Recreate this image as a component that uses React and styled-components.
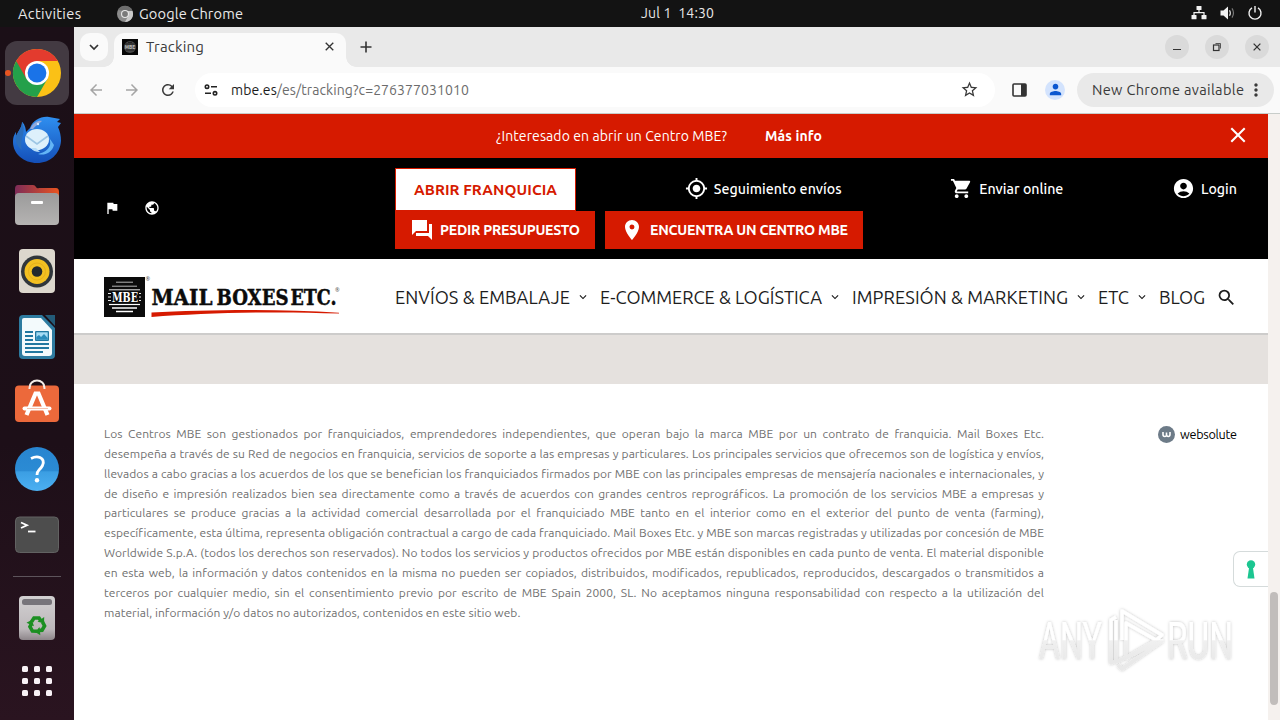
import React, { useLayoutEffect, useRef, useState } from 'react';
import styled, { createGlobalStyle, css } from 'styled-components';
import {
  MdAccountCircle,
  MdArrowBack,
  MdArrowForward,
  MdFlag,
  MdGpsFixed,
  MdKeyboardArrowDown,
  MdMoreVert,
  MdPerson,
  MdPlace,
  MdPublic,
  MdRefresh,
  MdSearch,
  MdShoppingCart,
  MdStarBorder,
} from 'react-icons/md';

const red = '#d61a00';

const GlobalStyle = createGlobalStyle`
  * {
    box-sizing: border-box;
  }
  body {
    margin: 0;
    overflow: hidden;
    font-family: Ubuntu, "Noto Sans", "Open Sans", sans-serif;
  }
  svg {
    display: block;
    flex: none;
    overflow: visible;
  }
`;

const Desktop = styled.div`
  position: relative;
  width: 1280px;
  height: 720px;
  display: flex;
  flex-direction: column;
  overflow: hidden;
`;

const FitBox = styled.span`
  display: block;
  flex: none;
  white-space: nowrap;
`;

// Label that tracks its letters so that it fills a slot of `width` pixels
const Fit = ({ width, children }) => {
  const ref = useRef(null);
  const [spacing, setSpacing] = useState(0);

  useLayoutEffect(() => {
    const natural = ref.current.getBoundingClientRect().width;
    setSpacing((width - natural) / (ref.current.textContent.length - 1));
  }, [width]);

  return (
    <FitBox style={{ width, letterSpacing: spacing }}>
      <span ref={ref}>{children}</span>
    </FitBox>
  );
};

/* ---------- system bar ---------- */

const SystemBar = styled.header`
  height: 27px;
  flex: none;
  display: grid;
  grid-template-columns: 1fr auto 1fr;
  align-items: center;
  padding: 0 18px;
  background: #131313;
  color: #e9e9e9;
  font-size: 14.6px;
`;

const SystemLeft = styled.div`
  display: flex;
  align-items: center;
`;

const AppName = styled.div`
  display: flex;
  align-items: center;
  gap: 6px;
  margin-left: 36px;
`;

const Clock = styled.div`
  padding: 0 0 2px 75px;
  font-size: 14px;
`;

const SystemTray = styled.div`
  display: flex;
  justify-content: flex-end;
  align-items: center;
  gap: 13px;
  padding-bottom: 1px;
`;

const GreyChrome = () => (
  <svg width="16" height="16" viewBox="0 0 16 16">
    <circle cx="8" cy="8" r="8" fill="#8b8b8b" />
    <path d="M1 4 A8 8 0 0 1 15.5 5 H8 Z" fill="#6d6d6d" />
    <path d="M15.5 5 A8 8 0 0 1 8 16 L11.5 9.5 L10 5 Z" fill="#c9c9c9" />
    <circle cx="8" cy="8" r="4" fill="#e8e8e8" />
    <circle cx="8" cy="8" r="2.9" fill="#7a7a7a" />
  </svg>
);

const Tray = () => (
  <SystemTray>
    <svg width="16" height="14" viewBox="0 0 16 14" fill="#f2f2f2">
      <rect x="5.5" y="0" width="5" height="4" rx="0.6" />
      <rect x="0.5" y="9" width="5" height="4.3" rx="0.6" />
      <rect x="10.5" y="9" width="5" height="4.3" rx="0.6" />
      <path d="M8 4v3M3 9V6.7h10V9" fill="none" stroke="#f2f2f2" strokeWidth="1.2" />
    </svg>
    <svg width="15" height="14" viewBox="0 0 15 14">
      <path d="M0.5 4.5H3.5L8 0.5V13.5L3.5 9.5H0.5Z" fill="#f2f2f2" />
      <path d="M9.5 4.2Q11.2 7 9.5 9.8" fill="none" stroke="#ddd" strokeWidth="1.2" />
      <path d="M12 2.4Q15 7 12 11.6" fill="none" stroke="#777" strokeWidth="1.2" />
    </svg>
    <svg width="14" height="14" viewBox="0 0 14 14" fill="none" stroke="#f2f2f2" strokeWidth="1.4">
      <path d="M4 1.9A6 6 0 1 0 10 1.9" />
      <path d="M7 0V6.5" />
    </svg>
  </SystemTray>
);

/* ---------- dock ---------- */

const Main = styled.div`
  flex: 1;
  display: flex;
  min-height: 0;
`;

const Dock = styled.nav`
  width: 74px;
  flex: none;
  display: flex;
  flex-direction: column;
  align-items: center;
  padding-top: 14px;
  background: linear-gradient(180deg, #1b0f17 0%, #1d0f18 60%, #2a1420 100%);
`;

const DockItem = styled.div`
  position: relative;
  width: 64px;
  height: ${(p) => p.$height || 66}px;
  display: flex;
  align-items: center;
  justify-content: center;
  ${(p) =>
    p.$active &&
    css`
      height: 64px;
      margin-bottom: 2px;
      border-radius: 12px;
      background: #433a42;
      &::before {
        content: '';
        position: absolute;
        left: 0;
        top: 29px;
        width: 6px;
        height: 6px;
        border-radius: 50%;
        background: #e95420;
      }
    `}
`;

const DockDivider = styled.hr`
  width: 48px;
  height: 1px;
  margin: 10px 0 8px;
  border: 0;
  background: #5d545b;
`;

const ChromeIcon = () => (
  <svg width="48" height="48" viewBox="0 0 48 48">
    <circle cx="24" cy="24" r="24" fill="#fbc116" />
    <path d="M24 24 L3.2 12 A24 24 0 0 0 24 48 L34.4 30 Z" fill="#24a04a" />
    <path d="M3.2 12 A24 24 0 0 1 44.8 12 H24 L13.6 30 Z" fill="#e33b2e" />
    <circle cx="24" cy="24" r="12" fill="#fff" />
    <circle cx="24" cy="24" r="9.4" fill="#1a73e8" />
  </svg>
);

const ThunderbirdIcon = () => (
  <svg width="48" height="48" viewBox="0 0 48 48">
    <defs>
      <linearGradient id="tb" x1="0" y1="0" x2="0" y2="1">
        <stop offset="0" stopColor="#2f8ff0" />
        <stop offset="1" stopColor="#144fb8" />
      </linearGradient>
    </defs>
    <path
      d="M9 6C11 7 13 12 13 16L17 12C20 4 28 0 36 1L47 3L44 6L48 7L45 11C47 15 48 20 48 25C47 38 37 47 24 47C11 47 0 38 0 26C0 21 1 19 3 16L3 20C6 14 9 11 9 6Z"
      fill="url(#tb)"
    />
    <path d="M9 6C14 17 6 23 9 34C2 29 2 21 3 16L3 20C6 14 9 11 9 6Z" fill="#2a6dbb" />
    <path d="M17 13C20 6 26 4 29 5C26 8 23 9 20 13Z" fill="#91a9dc" />
    <path d="M35 20C41 30 34 36 25 38C31 40 39 37 41 29Z" fill="#64b5f6" />
    <ellipse cx="24" cy="23.5" rx="12" ry="10.5" fill="#ddf0fb" />
    <path d="M13 20L24 28L35 20" fill="none" stroke="#9dc6e4" strokeWidth="1.6" />
    <path d="M18 32Q20 36 27 36L23 32Z" fill="#b6dcf7" />
    <circle cx="25" cy="8" r="1.2" fill="#d4e8fa" />
  </svg>
);

const FilesIcon = () => (
  <svg width="46" height="42" viewBox="0 0 46 42">
    <defs>
      <linearGradient id="fl" x1="0" x2="1">
        <stop offset="0" stopColor="#7d2c58" />
        <stop offset="1" stopColor="#e95420" />
      </linearGradient>
      <linearGradient id="fg" x1="0" y1="0" x2="0" y2="1">
        <stop offset="0" stopColor="#9b9b9b" />
        <stop offset="1" stopColor="#b5b3b2" />
      </linearGradient>
    </defs>
    <path d="M1 5Q1 1 4 1H19Q21 1 22 3T25 4H42Q45 4 45 8V20H1Z" fill="url(#fl)" />
    <rect x="1" y="9" width="44" height="32" rx="4" fill="url(#fg)" />
    <rect x="17" y="17" width="12" height="3" rx="1" fill="#fff" />
  </svg>
);

const RhythmboxIcon = () => (
  <svg width="38" height="46" viewBox="0 0 38 46">
    <rect x="1" y="1" width="36" height="44" rx="4" fill="#dcd7cd" />
    <circle cx="19" cy="23.5" r="16" fill="#30363b" />
    <circle cx="19" cy="23.5" r="12.5" fill="#f3c021" />
    <circle cx="19" cy="23.5" r="8.5" fill="none" stroke="#e6b01c" strokeWidth="1" />
    <circle cx="19" cy="23.5" r="5.3" fill="#23282e" />
  </svg>
);

const WriterIcon = () => (
  <svg width="38" height="46" viewBox="0 0 38 46">
    <path d="M5 1H24L37 14V41Q37 45 33 45H5Q1 45 1 41V5Q1 1 5 1Z" fill="#2d7ba0" />
    <path d="M6 4H23L34 16V39Q34 42 31 42H7Q4 42 4 39V6Q4 4 6 4Z" fill="#f3fafc" />
    <path d="M27 1H37V12Z" fill="#235b78" />
    <g fill="#2178a0">
      <rect x="7" y="17" width="8" height="2" />
      <rect x="7" y="21" width="8" height="2" />
      <rect x="7" y="25" width="8" height="2" />
      <rect x="7" y="29" width="24" height="2" />
      <rect x="7" y="33" width="24" height="2" />
      <rect x="7" y="37" width="18" height="2" />
      <rect x="17" y="17" width="14" height="10" rx="1" />
    </g>
    <rect x="18.3" y="18.3" width="11.4" height="7.4" fill="#a6dcf4" />
    <path d="M18.3 25.7V23L21 21L23 23L26 20L29.7 24V25.7Z" fill="#2b8cba" />
  </svg>
);

const SoftwareIcon = () => (
  <svg width="46" height="44" viewBox="0 0 46 44">
    <path d="M15.5 8V7.5A7 6.5 0 0 1 30.5 7.5V8" fill="none" stroke="#f4ece7" strokeWidth="2" />
    <rect x="1" y="5.500" width="44" height="36.500" rx="4" fill="#ec693b" />
    <path d="M15.5 9A7 8 0 0 1 16.4 5M30.5 9A7 8 0 0 0 29.6 5" fill="none" stroke="#f4ece7" strokeWidth="2" />
    <g fill="none" stroke="#fff">
      <path d="M12.5 35L21.5 13.5H24.5L33.5 35" strokeWidth="4.2" />
      <path d="M10.500 28.500H35.500" strokeWidth="4" strokeLinecap="round" />
    </g>
    <path d="M13 28.500H34" stroke="#f2b49b" strokeWidth="0.8" />
  </svg>
);

const HelpIcon = () => (
  <svg width="46" height="46" viewBox="0 0 46 46">
    <defs>
      <linearGradient id="hp" x1="0" y1="0" x2="0" y2="1">
        <stop offset="0" stopColor="#2885d0" />
        <stop offset="0.55" stopColor="#2b8bd4" />
        <stop offset="0.56" stopColor="#3b9ee3" />
        <stop offset="1" stopColor="#4cb0f2" />
      </linearGradient>
    </defs>
    <circle cx="23" cy="23" r="22" fill="url(#hp)" />
    <path d="M17 12.5Q22 10 26 11.500Q31 14 28.5 19.500Q27.5 21.500 25 24Q23 26 23 29" fill="none" stroke="#fff" strokeWidth="2.8" />
    <circle cx="23" cy="34.2" r="2.2" fill="#fff" />
  </svg>
);

const TerminalIcon = () => (
  <svg width="46" height="38" viewBox="0 0 46 38">
    <rect x="1.500" y="1" width="43" height="35.500" rx="4" fill="#4d4d4d" stroke="#626262" />
    <path d="M7 6.5L13 9.2L7 12" fill="none" stroke="#fff" strokeWidth="1.8" />
    <path d="M14 15.5H21.5" stroke="#fff" strokeWidth="1.8" />
  </svg>
);

const TrashIcon = () => (
  <svg width="38" height="46" viewBox="0 0 38 46">
    <defs>
      <linearGradient id="tr" x1="0" y1="0" x2="0" y2="1">
        <stop offset="0" stopColor="#d2d0d1" />
        <stop offset="0.75" stopColor="#bdb8bb" />
        <stop offset="1" stopColor="#8d868a" />
      </linearGradient>
    </defs>
    <rect x="1" y="1" width="36" height="44" rx="4" fill="url(#tr)" />
    <rect x="4" y="4" width="30" height="6" rx="2.5" fill="#77747a" />
    <g transform="translate(19 30)" fill="none" stroke="#1c8f22" strokeWidth="3.6">
      {[0, 120, 240].map((a) => (
        <g key={a} transform={`rotate(${a})`}>
          <path d="M-5.400 -3.200L-3 -7H2L3.600 -4.600" />
          <path d="M0.500 -3.200L7 -1.800L7.200 -8Z" fill="#1c8f22" stroke="none" />
        </g>
      ))}
    </g>
  </svg>
);

const GridIcon = () => (
  <svg width="30" height="30" viewBox="0 0 30 30" fill="#f8f2f6">
    {[0, 12, 24].map((y) =>
      [0, 12, 24].map((x) => <rect key={`${x}-${y}`} x={x} y={y} width="6" height="6" rx="1.6" />),
    )}
  </svg>
);

/* ---------- browser chrome ---------- */

const Browser = styled.div`
  flex: 1;
  display: flex;
  flex-direction: column;
  min-width: 0;
  background: #fafafa;
`;

const TabStrip = styled.div`
  height: 40px;
  flex: none;
  display: flex;
  align-items: center;
  padding: 0 11px 0 6px;
  background: #e9e9e9;
`;

const TabSearch = styled.button`
  width: 28px;
  height: 28px;
  display: grid;
  place-items: center;
  padding: 0;
  border: 0;
  border-radius: 10px;
  background: #fafafa;
  color: #333;
`;

const Tab = styled.div`
  position: relative;
  align-self: flex-end;
  width: 232px;
  height: 34px;
  margin-left: 6px;
  padding: 0 12px 7px 8px;
  display: flex;
  align-items: center;
  gap: 8px;
  border-radius: 10px 10px 0 0;
  background: #fafafa;
  color: #3c3c3c;
  font-size: 15px;
  &::before,
  &::after {
    content: '';
    position: absolute;
    bottom: 0;
    width: 10px;
    height: 10px;
  }
  &::before {
    left: -10px;
    background: radial-gradient(circle at 0 0, transparent 9.5px, #fafafa 10px);
  }
  &::after {
    right: -10px;
    background: radial-gradient(circle at 100% 0, transparent 9.5px, #fafafa 10px);
  }
`;

const TabClose = styled.span`
  margin-left: auto;
`;

const NewTab = styled.span`
  margin-left: 14px;
`;

const WindowButtons = styled.div`
  display: flex;
  gap: 16px;
  margin-left: auto;
`;

const WindowButton = styled.button`
  width: 24px;
  height: 24px;
  display: grid;
  place-items: center;
  padding: 0;
  border: 0;
  border-radius: 50%;
  background: #dadada;
`;

const Toolbar = styled.div`
  height: 47px;
  flex: none;
  display: flex;
  align-items: center;
  padding: 0 6px 1px 13px;
  border-bottom: 1px solid #c8cdca;
  color: #3a3a3a;
`;

const NavIcons = styled.div`
  display: flex;
  align-items: center;
  gap: 18px;
  margin-right: 18px;
  .off {
    color: #a5a5a5;
  }
`;

const AddressBar = styled.div`
  width: 800px;
  height: 34px;
  display: flex;
  align-items: center;
  padding: 0 16px 0 9px;
  border-radius: 17px;
  background: #fff;
  font-size: 14px;
  color: #6c6c6c;
  svg:last-child {
    margin-left: auto;
    color: #3a3a3a;
  }
  b {
    font-weight: 400;
    color: #1c1c1c;
  }
`;

const UrlText = styled.div`
  margin-left: 13px;
`;

const Avatar = styled.span`
  width: 20px;
  height: 20px;
  display: grid;
  place-items: center;
  margin: 0 12px 0 18px;
  border-radius: 50%;
  background: #d3e3fd;
  color: #0b57d0;
`;

const SidePanelIcon = styled.span`
  margin-left: 17px;
`;

const UpdateChip = styled.div`
  height: 34px;
  flex: 1;
  display: flex;
  align-items: center;
  padding: 0 7px 0 15px;
  border-radius: 17px;
  background: #e9e9e9;
  font-size: 14.6px;
  svg {
    margin-left: 2px;
  }
`;

const Cross = ({ size, color = '#333', width = 1.5 }) => (
  <svg width={size} height={size} viewBox="0 0 10 10">
    <path d="M0.8 0.8L9.2 9.2M9.2 0.8L0.8 9.2" stroke={color} strokeWidth={width} />
  </svg>
);

/* ---------- page ---------- */

const Viewport = styled.div`
  flex: 1;
  display: flex;
  min-height: 0;
`;

const Page = styled.main`
  position: relative;
  flex: 1;
  min-width: 0;
  display: flex;
  flex-direction: column;
  background: #fff;
`;

const ScrollTrack = styled.div`
  width: 12px;
  flex: none;
  padding: 478px 2px 0;
  background: #f5f1ee;
`;

const ScrollThumb = styled.div`
  height: 113px;
  border-radius: 4px;
  background: #c1bdbb;
`;

const PromoBar = styled.div`
  height: 44px;
  flex: none;
  display: flex;
  align-items: center;
  padding: 0 22px 0 422px;
  background: ${red};
  color: #fff;
  font-size: 14px;
  svg {
    margin: -2px 0 0 auto;
  }
`;

const PromoLink = styled.a`
  margin-left: 38px;
  font-weight: 700;
`;

const ServiceBar = styled.div`
  height: 101px;
  flex: none;
  display: flex;
  padding: 10px 30px 0;
  background: #000;
  color: #fff;
`;

const Locale = styled.div`
  width: 291px;
  flex: none;
  height: 80px;
  display: flex;
  align-items: center;
  gap: 24px;
`;

const Services = styled.div`
  flex: 1;
  margin-right: 1px;
`;

const ServiceRow = styled.div`
  height: 43px;
  display: flex;
  align-items: center;
  justify-content: space-between;
`;

const FranchiseButton = styled.a`
  height: 43px;
  display: flex;
  align-items: center;
  padding: 0 18px 1px;
  border: 1px solid ${red};
  background: #fff;
  color: ${red};
  font-size: 15.2px;
  font-weight: 700;
`;

const ServiceLink = styled.a`
  display: flex;
  align-items: center;
  gap: 6px;
  padding-bottom: 2px;
  font-size: 14.2px;
  font-weight: 500;
`;

const ActionRow = styled.div`
  display: flex;
  gap: 10px;
`;

const ActionButton = styled.a`
  height: 38px;
  display: flex;
  align-items: center;
  gap: 6px;
  padding: 0 15px;
  background: ${red};
  font-size: 14.2px;
  font-weight: 600;
`;

const MainNav = styled.nav`
  height: 76px;
  flex: none;
  display: flex;
  align-items: center;
  padding: 3px 31px 0 30px;
  border-bottom: 2px solid #cdcccb;
  color: #1d1d1d;
  font-size: 18.2px;
`;

const LogoSlot = styled.div`
  width: 291px;
  flex: none;
`;

const NavLink = styled.a`
  display: flex;
  align-items: center;
  gap: 6px;
  margin: -1px 10px 0 0;
`;

const PlainNavLink = styled.a`
  margin: -1px 11px 0 0;
`;

const Band = styled.div`
  height: 49px;
  flex: none;
  background: #e5e1de;
`;

const Footer = styled.footer`
  display: flex;
  justify-content: space-between;
  padding: 40px 31px 0 30px;
`;

const Legal = styled.p`
  width: 940px;
  margin: 0;
  color: #707070;
  font-size: 12px;
  line-height: 19.85px;
  letter-spacing: 0.06px;
`;

const LegalLine = styled.span`
  display: block;
  white-space: nowrap;
  text-align: justify;
  text-align-last: ${(p) => (p.$last ? 'left' : 'justify')};
`;

const Credit = styled.div`
  height: 20px;
  display: flex;
  align-items: center;
  gap: 5px;
  color: #000;
  font-size: 12.6px;
`;

const CookieTab = styled.button`
  position: absolute;
  right: 0;
  top: 437px;
  width: 35px;
  height: 36px;
  display: grid;
  place-items: center;
  padding: 0;
  border: 1px solid #d5dbdb;
  border-right: 0;
  border-radius: 7px 0 0 7px;
  background: #fff;
`;

const Watermark = styled.div`
  position: absolute;
  left: 1030px;
  top: 600px;
`;

const MbeLogo = () => (
  <svg width="240" height="44" viewBox="0 0 240 44">
    <rect x="0" y="1" width="41" height="40" fill="#0b0b0b" />
    <g stroke="#fff">
      <path d="M12 6.2H29M8 10.2H33" strokeWidth="0.7" />
      <path d="M5 13.8H36" strokeWidth="0.9" />
      <path d="M4 17.5H7M35 17.5H37M4 21H7M35 21H37M4 24.5H7M35 24.5H37" strokeWidth="0.9" />
      <path d="M5 28.5H36" strokeWidth="1.2" />
      <path d="M8 32H33M12 35.5H29" strokeWidth="1.4" />
    </g>
    <text x="8" y="25.8" fill="#fff" fontFamily="DejaVu Serif, serif" fontWeight="700" fontSize="12.4" textLength="26" lengthAdjust="spacingAndGlyphs">
      MBE
    </text>
    <text x="41.5" y="5" fill="#555" fontFamily="Noto Sans, sans-serif" fontSize="5.5">®</text>
    <g fill="#0b0b0b" stroke="#0b0b0b" strokeWidth="0.5" fontFamily="DejaVu Serif, serif" fontWeight="700" fontSize="22.4">
      <text x="47.5" y="29.3" textLength="61" lengthAdjust="spacingAndGlyphs">MAIL</text>
      <text x="112.5" y="29.3" textLength="72" lengthAdjust="spacingAndGlyphs">BOXES</text>
      <text x="186.5" y="29.3" textLength="46" lengthAdjust="spacingAndGlyphs">ETC.</text>
    </g>
    <text x="231" y="16" fill="#555" fontFamily="Noto Sans, sans-serif" fontSize="5.5">®</text>
    <path d="M47.500 36.600C100 34 170 32.500 235 36.800V37.600C170 35 100 37 47.500 41Z" fill={red} />
  </svg>
);

const AnyRunMark = () => (
  <svg width="212" height="84" viewBox="0 0 212 84">
    <defs>
      <filter id="glow" x="-10%" y="-10%" width="120%" height="120%">
        <feDropShadow dx="0" dy="0" stdDeviation="1.6" floodColor="#000" floodOpacity="0.26" />
      </filter>
      <linearGradient id="wm" x1="0" y1="22" x2="0" y2="60" gradientUnits="userSpaceOnUse">
        <stop offset="0.48" stopColor="#fff" />
        <stop offset="0.49" stopColor="#f0f0f0" />
        <stop offset="1" stopColor="#e9e9e9" />
      </linearGradient>
    </defs>
    <g filter="url(#glow)" fill="url(#wm)" fontFamily="Roboto, sans-serif" fontWeight="400" fontSize="51">
      <text x="9" y="59" textLength="63" lengthAdjust="spacingAndGlyphs">ANY</text>
      <text x="137" y="59" textLength="66" lengthAdjust="spacingAndGlyphs">RUN</text>
      <g fill="none" stroke="url(#wm)" strokeWidth="3.4" strokeLinejoin="round">
        <path d="M92 40V11L132 35L126 40L96 23V58L130 38" />
        <path d="M86 17L81 20V63L86 61V20" />
        <path d="M86 62L132 41L92 69L88 65" />
      </g>
    </g>
  </svg>
);

const navItems = [
  ['ENVÍOS & EMBALAJE', 175],
  ['E-COMMERCE & LOGÍSTICA', 222],
  ['IMPRESIÓN & MARKETING', 216],
  ['ETC', 31],
];

const legalLines = [
  'Los Centros MBE son gestionados por franquiciados, emprendedores independientes, que operan bajo la marca MBE por un contrato de franquicia. Mail Boxes Etc.',
  'desempeña a través de su Red de negocios en franquicia, servicios de soporte a las empresas y particulares. Los principales servicios que ofrecemos son de logística y envíos,',
  'llevados a cabo gracias a los acuerdos de los que se benefician los franquiciados firmados por MBE con las principales empresas de mensajería nacionales e internacionales, y',
  'de diseño e impresión realizados bien sea directamente como a través de acuerdos con grandes centros reprográficos. La promoción de los servicios MBE a empresas y',
  'particulares se produce gracias a la actividad comercial desarrollada por el franquiciado MBE tanto en el interior como en el exterior del punto de venta (farming),',
  'específicamente, esta última, representa obligación contractual a cargo de cada franquiciado. Mail Boxes Etc. y MBE son marcas registradas y utilizadas por concesión de MBE',
  'Worldwide S.p.A. (todos los derechos son reservados). No todos los servicios y productos ofrecidos por MBE están disponibles en cada punto de venta. El material disponible',
  'en esta web, la información y datos contenidos en la misma no pueden ser copiados, distribuidos, modificados, republicados, reproducidos, descargados o transmitidos a',
  'terceros por cualquier medio, sin el consentimiento previo por escrito de MBE Spain 2000, SL. No aceptamos ninguna responsabilidad con respecto a la utilización del',
  'material, información y/o datos no autorizados, contenidos en este sitio web.',
];

const DockBar = () => (
  <Dock>
    <DockItem $active><ChromeIcon /></DockItem>
    <DockItem $height={65}><ThunderbirdIcon /></DockItem>
    <DockItem><FilesIcon /></DockItem>
    <DockItem><RhythmboxIcon /></DockItem>
    <DockItem><WriterIcon /></DockItem>
    <DockItem $height={63}><SoftwareIcon /></DockItem>
    <DockItem $height={71}><HelpIcon /></DockItem>
    <DockItem $height={62}><TerminalIcon /></DockItem>
    <DockDivider />
    <DockItem $height={66}><TrashIcon /></DockItem>
    <DockItem $height={60}><GridIcon /></DockItem>
  </Dock>
);

const BrowserHead = () => (
  <>
    <TabStrip>
      <TabSearch>
        <svg width="10" height="6" viewBox="0 0 10 6">
          <path d="M1 1L5 5L9 1" fill="none" stroke="#333" strokeWidth="1.7" />
        </svg>
      </TabSearch>
      <Tab>
        <svg width="16" height="16" viewBox="0 0 16 16">
          <rect width="16" height="16" fill="#080808" />
          <circle cx="8" cy="8" r="6" fill="#484848" />
          <path d="M3 5H13M4 11H12M6 3.500H10" stroke="#222" />
          <text x="2.800" y="10" fontSize="4.800" fill="#bbb" fontWeight="600">MBE</text>
        </svg>
        <Fit width={58}>Tracking</Fit>
        <TabClose><Cross size={9} /></TabClose>
      </Tab>
      <NewTab>
        <svg width="12" height="12" viewBox="0 0 12 12">
          <path d="M6 0.500V11.500M0.500 6H11.500" stroke="#333" strokeWidth="1.6" />
        </svg>
      </NewTab>
      <WindowButtons>
        <WindowButton>
          <svg width="10" height="10" viewBox="0 0 10 10"><path d="M1 7.500H9" stroke="#333" /></svg>
        </WindowButton>
        <WindowButton>
          <svg width="10" height="10" viewBox="0 0 10 10" fill="none" stroke="#333">
            <rect x="1.500" y="3" width="5.500" height="5.500" strokeWidth="1.2" />
            <path d="M3.500 1.500H8.500V6.500" strokeWidth="0.8" />
          </svg>
        </WindowButton>
        <WindowButton><Cross size={8} width={1.6} /></WindowButton>
      </WindowButtons>
    </TabStrip>
    <Toolbar>
      <NavIcons>
        <MdArrowBack size={18} className="off" />
        <MdArrowForward size={18} className="off" />
        <MdRefresh size={18} />
      </NavIcons>
      <AddressBar>
        <svg width="14" height="12" viewBox="0 0 14 12" fill="none" stroke="#222" strokeWidth="1.6">
          <circle cx="3" cy="2.700" r="1.700" />
          <path d="M7 2.700H13M1 9.300H7" />
          <circle cx="11" cy="9.300" r="1.700" />
        </svg>
        <UrlText>
          <Fit width={238}><b>mbe.es</b>/es/tracking?c=276377031010</Fit>
        </UrlText>
        <MdStarBorder size={19} />
      </AddressBar>
      <SidePanelIcon>
        <svg width="15" height="14" viewBox="0 0 15 14">
          <rect x="1" y="1" width="13" height="12" rx="1" fill="none" stroke="#333" strokeWidth="1.6" />
          <rect x="9" y="1" width="5" height="12" fill="#333" />
        </svg>
      </SidePanelIcon>
      <Avatar><MdPerson size={17} /></Avatar>
      <UpdateChip>
        <Fit width={152}>New Chrome available</Fit>
        <MdMoreVert size={20} />
      </UpdateChip>
    </Toolbar>
  </>
);

const PageHeader = () => (
  <>
    <PromoBar>
      <Fit width={231}>¿Interesado en abrir un Centro MBE?</Fit>
      <PromoLink><Fit width={57}>Más info</Fit></PromoLink>
      <Cross size={16} color="#fff" width={1.3} />
    </PromoBar>
    <ServiceBar>
      <Locale>
        <MdFlag size={16} />
        <MdPublic size={16} />
      </Locale>
      <Services>
        <ServiceRow>
          <FranchiseButton><Fit width={143}>ABRIR FRANQUICIA</Fit></FranchiseButton>
          <ServiceLink><MdGpsFixed size={23} /><Fit width={128}>Seguimiento envíos</Fit></ServiceLink>
          <ServiceLink><MdShoppingCart size={23} /><Fit width={84}>Enviar online</Fit></ServiceLink>
          <ServiceLink><MdAccountCircle size={23} /><Fit width={36}>Login</Fit></ServiceLink>
        </ServiceRow>
        <ActionRow>
          <ActionButton>
            <svg width="24" height="24" viewBox="0 0 24 24" fill="currentColor">
              <path d="M22 6h-3v9H6v3h12l4 4V6zm-5 7V2H2v15l4-4h11z" />
            </svg>
            <Fit width={140}>PEDIR PRESUPUESTO</Fit>
          </ActionButton>
          <ActionButton>
            <MdPlace size={24} />
            <Fit width={198}>ENCUENTRA UN CENTRO MBE</Fit>
          </ActionButton>
        </ActionRow>
      </Services>
    </ServiceBar>
    <MainNav>
      <LogoSlot><MbeLogo /></LogoSlot>
      {navItems.map(([label, width]) => (
        <NavLink key={label}>
          <Fit width={width}>{label}</Fit>
          <MdKeyboardArrowDown size={14} />
        </NavLink>
      ))}
      <PlainNavLink><Fit width={46}>BLOG</Fit></PlainNavLink>
      <MdSearch size={21} />
    </MainNav>
  </>
);

const App = () => (
  <Desktop>
    <GlobalStyle />
    <SystemBar>
      <SystemLeft>
        <Fit width={63}>Activities</Fit>
        <AppName>
          <GreyChrome />
          <Fit width={104}>Google Chrome</Fit>
        </AppName>
      </SystemLeft>
      <Clock><Fit width={73}>Jul 1&nbsp; 14:30</Fit></Clock>
      <Tray />
    </SystemBar>
    <Main>
      <DockBar />
      <Browser>
        <BrowserHead />
        <Viewport>
          <Page>
            <PageHeader />
            <Band />
            <Footer>
              <Legal>
                {legalLines.map((line, i) => (
                  <LegalLine key={line} $last={i === legalLines.length - 1}>{line}</LegalLine>
                ))}
              </Legal>
              <Credit>
                <svg width="17" height="17" viewBox="0 0 17 17">
                  <circle cx="8.500" cy="8.500" r="8.500" fill="#6d7b88" />
                  <path d="M5 6V8.500Q5 10.500 6.800 10.500T8.500 8.500V6.500V8.500Q8.700 10.500 10.300 10.500T12 8.500V6" fill="none" stroke="#fff" strokeWidth="1.600" />
                </svg>
                <Fit width={57}>websolute</Fit>
              </Credit>
            </Footer>
            <CookieTab>
              <svg width="10" height="19" viewBox="0 0 10 19" fill="#1cc691">
                <circle cx="5" cy="4.500" r="4.200" />
                <path d="M3.300 6H6.700L8.500 18.500H1.500Z" />
              </svg>
            </CookieTab>
          </Page>
          <ScrollTrack><ScrollThumb /></ScrollTrack>
        </Viewport>
      </Browser>
    </Main>
    <Watermark><AnyRunMark /></Watermark>
  </Desktop>
);

export default App;
